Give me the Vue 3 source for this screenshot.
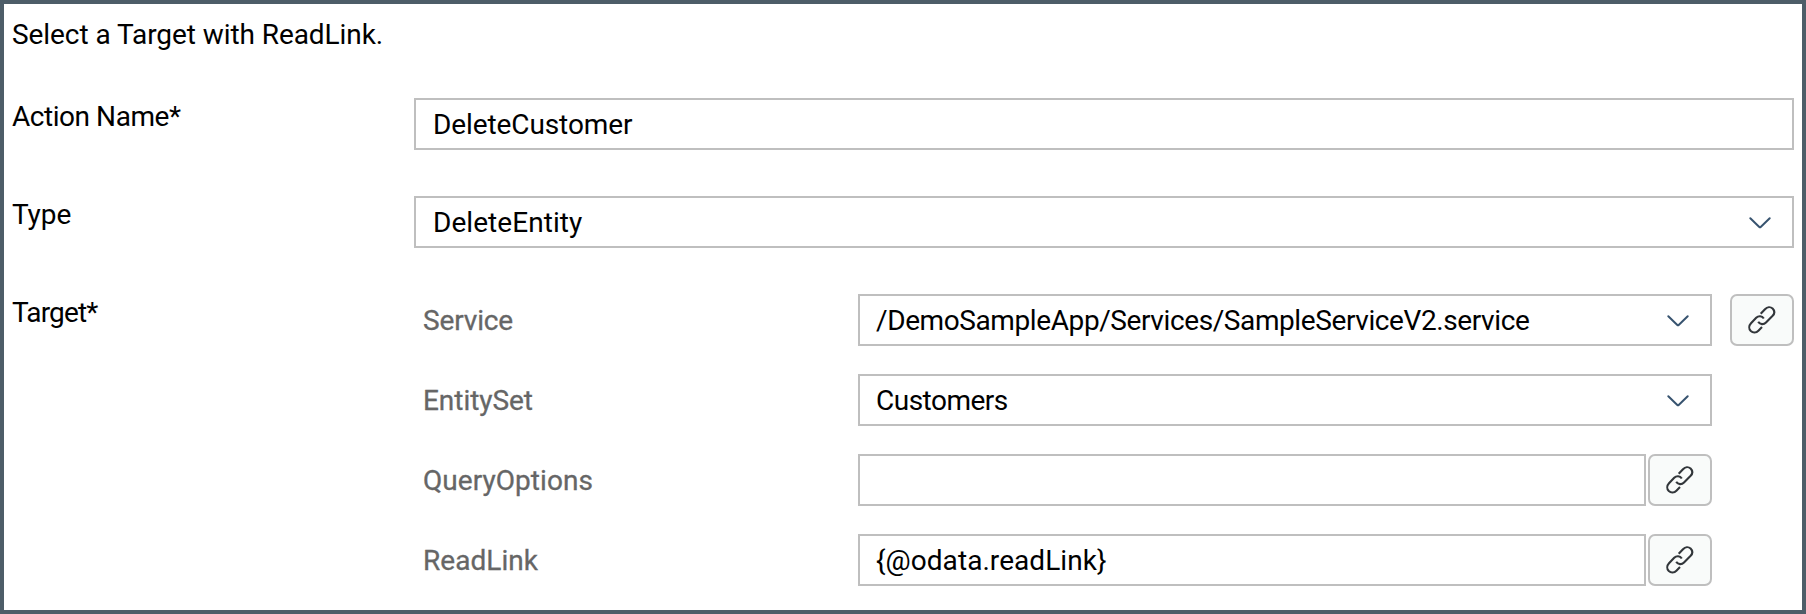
<script setup>
import { h } from 'vue'

const Chevron = () =>
  h('svg', { width: 24, height: 14, viewBox: '0 0 24 14', fill: 'none' }, [
    h('path', {
      d: 'M2.3 2.2 L11.3 11 Q12 11.6 12.7 11 L21.7 2.2',
      stroke: '#37536f',
      'stroke-width': 2,
      'stroke-linecap': 'round',
    }),
  ])

const LinkIcon = () =>
  h('svg', { width: 28, height: 28, viewBox: '0 0 28 28', fill: 'none' }, [
    h('path', {
      d: 'M12.7 7.7 L17 3.2 C19.3 0.8 22.4 0.5 24.6 2.6 C26.8 4.8 26.6 7.8 24.4 10.1 L18 16.5 C15.6 18.9 12 18.7 10.2 15.7',
      stroke: '#32363a',
      'stroke-width': 2.1,
    }),
    h('path', {
      d: 'M15.8 12.5 C14 9.6 10.4 9.5 8.2 11.8 L3 17.2 C0.8 19.5 0.7 22.9 2.8 25 C5 27.1 8.2 26.9 10.4 24.7 L14 21.1',
      stroke: '#32363a',
      'stroke-width': 2.1,
    }),
  ])
</script>

<template>
  <main class="panel">
    <p class="title">Select a Target with ReadLink.</p>

    <div class="row">
      <label class="label t-action">Action Name*</label>
      <div class="field wide t-customer">DeleteCustomer</div>
    </div>

    <div class="row">
      <label class="label t-type">Type</label>
      <div class="field wide t-entity"><span>DeleteEntity</span><Chevron /></div>
    </div>

    <div class="row last">
      <label class="label t-target">Target*</label>
      <div class="group">
        <div class="sub">
          <span class="sublabel t-service">Service</span>
          <div class="field t-path"><span>/DemoSampleApp/Services/SampleServiceV2.service</span><Chevron /></div>
          <button class="link spaced"><LinkIcon /></button>
        </div>
        <div class="sub">
          <span class="sublabel t-set">EntitySet</span>
          <div class="field t-customers"><span>Customers</span><Chevron /></div>
        </div>
        <div class="sub">
          <span class="sublabel t-query">QueryOptions</span>
          <div class="field short"></div>
          <button class="link"><LinkIcon /></button>
        </div>
        <div class="sub">
          <span class="sublabel t-read">ReadLink</span>
          <div class="field short t-odata">{@odata.readLink}</div>
          <button class="link"><LinkIcon /></button>
        </div>
      </div>
    </div>
  </main>
</template>

<style>
body {
  margin: 0;
  background: #fff;
}
</style>

<style scoped>
.panel {
  box-sizing: border-box;
  width: 1806px;
  height: 614px;
  border: 4px solid #4d5d68;
  background: #fff;
  padding: 13px 8px 0;
  font-family: Roboto, "Liberation Sans", sans-serif;
  font-size: 28px;
  line-height: 36px;
  color: #000;
  white-space: nowrap;
}
.title {
  margin: 0 0 45px;
  letter-spacing: -0.07px;
}
.row {
  display: flex;
  align-items: flex-start;
  margin-bottom: 46px;
}
.last {
  margin-bottom: 0;
}
.label {
  width: 402px;
  flex: none;
  padding-top: 1px;
}
.field {
  box-sizing: border-box;
  display: flex;
  align-items: center;
  justify-content: space-between;
  width: 854px;
  height: 52px;
  flex: none;
  border: 2px solid #bfbfbf;
  background: #fff;
  padding: 2px 20px 0 16px;
}
.wide {
  width: 1380px;
  padding-left: 17px;
}
.short {
  width: 788px;
}
.group {
  display: flex;
  flex-direction: column;
  gap: 28px;
}
.sub {
  display: flex;
  align-items: center;
}
.sublabel {
  box-sizing: border-box;
  width: 444px;
  flex: none;
  padding: 2px 0 0 9px;
  color: #666;
  -webkit-text-stroke: 0.3px #666;
}
.link {
  box-sizing: border-box;
  display: flex;
  align-items: center;
  justify-content: center;
  width: 64px;
  height: 52px;
  margin: 0 0 0 2px;
  padding: 0;
  border: 2px solid #bfbfbf;
  border-radius: 7px;
  background: #f9fbfa;
}
.spaced {
  margin-left: 18px;
}
.t-action { letter-spacing: -0.45px; }
.t-type { letter-spacing: -0.1px; }
.t-target { letter-spacing: -0.85px; }
.t-customer { letter-spacing: -0.1px; }
.t-entity { letter-spacing: 0.06px; }
.t-service { letter-spacing: -0.15px; }
.t-set { letter-spacing: -0.05px; }
.t-query { letter-spacing: 0.05px; }
.t-read { letter-spacing: 0.05px; }
.t-path { letter-spacing: -0.4px; }
.t-customers { letter-spacing: -0.5px; }
.t-odata { letter-spacing: 0.06px; }
</style>
